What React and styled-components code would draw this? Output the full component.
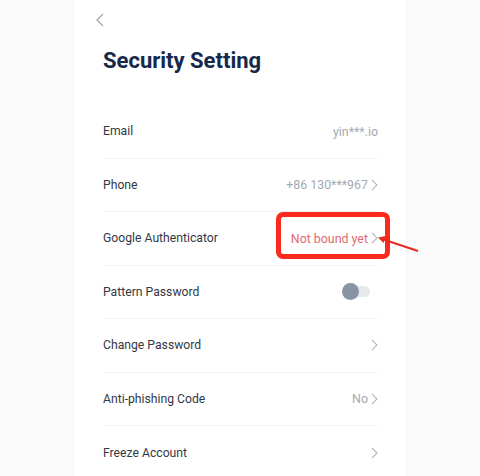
import React from 'react';
import styled, { createGlobalStyle } from 'styled-components';

const GlobalStyle = createGlobalStyle`
    body {
        margin: 0;
        background: #fafafa;
        font-family: Roboto, "Liberation Sans", sans-serif;
    }
`

const Page = styled.div`
    display: flex;
    justify-content: center;
    min-height: 476px;
`

const Panel = styled.div`
    width: 330px;
    box-sizing: border-box;
    background: #ffffff;
    padding: 0 27px 0 28px;
    overflow: visible;
`

const NavBar = styled.div`
    height: 40px;
    display: flex;
    align-items: flex-start;
    padding-top: 13px;
    box-sizing: border-box;
    margin-left: -7px;
`

const Title = styled.h1`
    margin: 7px 0 30px;
    font-size: 22px;
    line-height: 28px;
    font-weight: 700;
    color: #16294a;
`

const List = styled.div`
    display: flex;
    flex-direction: column;
`

const Row = styled.div`
    position: relative;
    height: 53.5px;
    box-sizing: border-box;
    display: flex;
    align-items: center;
    justify-content: space-between;
    border-bottom: ${p => (p.last ? 'none' : '1px solid #f1f2f4')};
`

const Label = styled.span`
    font-size: 12.2px;
    color: #333946;
`

const Value = styled.span`
    display: flex;
    align-items: center;
    gap: 3px;
    font-size: 12.4px;
    color: ${p => (p.warn ? '#de6a73' : '#a6aab2')};
`

const Toggle = styled.span`
    position: relative;
    width: 28px;
    height: 17px;
    margin-right: 8px;
    &::before {
        content: '';
        position: absolute;
        left: 8px;
        top: 3px;
        width: 20px;
        height: 11px;
        border-radius: 6px;
        background: #e6e8ec;
    }
    &::after {
        content: '';
        position: absolute;
        left: 0;
        top: 0;
        width: 17px;
        height: 17px;
        border-radius: 50%;
        background: #8893a5;
    }
`

const Highlight = styled.div`
    position: absolute;
    right: -12px;
    top: 0;
    width: 114px;
    height: 47px;
    box-sizing: border-box;
    border: 5px solid #fb2a1c;
    border-radius: 7px;
    pointer-events: none;
`

const Pointer = styled.svg`
    position: absolute;
    right: -42px;
    top: 21px;
`

function Chevron({ color = '#b4b8bf' }) {
    return (
        <svg width="7" height="12" viewBox="0 0 7 12">
            <path d="M1 1 L6 6 L1 11" fill="none" stroke={color} strokeWidth="1.1" />
        </svg>
    );
}

function BackIcon() {
    return (
        <svg width="8" height="14" viewBox="0 0 8 14">
            <path d="M7 1 L1 7 L7 13" fill="none" stroke="#9ea3ab" strokeWidth="1.2" />
        </svg>
    );
}

const rows = [
    { label: 'Email', value: 'yin***.io', arrow: false },
    { label: 'Phone', value: '+86 130***967', arrow: true },
    { label: 'Google Authenticator', value: 'Not bound yet', arrow: true, warn: true },
    { label: 'Pattern Password', toggle: true },
    { label: 'Change Password', value: '', arrow: true },
    { label: 'Anti-phishing Code', value: 'No', arrow: true },
    { label: 'Freeze Account', value: '', arrow: true },
];

function App() {
    return (
        <Page>
            <GlobalStyle />
            <Panel>
                <NavBar><BackIcon /></NavBar>
                <Title>Security Setting</Title>
                <List>
                    {rows.map((r, i) => (
                        <Row key={r.label} last={i === rows.length - 1}>
                            <Label>{r.label}</Label>
                            {r.toggle ? (
                                <Toggle />
                            ) : (
                                <Value warn={r.warn}>
                                    {r.value}
                                    {r.arrow && <Chevron />}
                                </Value>
                            )}
                            {r.warn && (
                                <>
                                    <Highlight />
                                    <Pointer width="44" height="20" viewBox="0 0 44 20">
                                        <line x1="42" y1="18" x2="6" y2="6" stroke="#e8291d" strokeWidth="2" />
                                        <path d="M2 4.5 L10 3 L7.5 10 Z" fill="#e8291d" />
                                    </Pointer>
                                </>
                            )}
                        </Row>
                    ))}
                </List>
            </Panel>
        </Page>
    );
}

export default App;
